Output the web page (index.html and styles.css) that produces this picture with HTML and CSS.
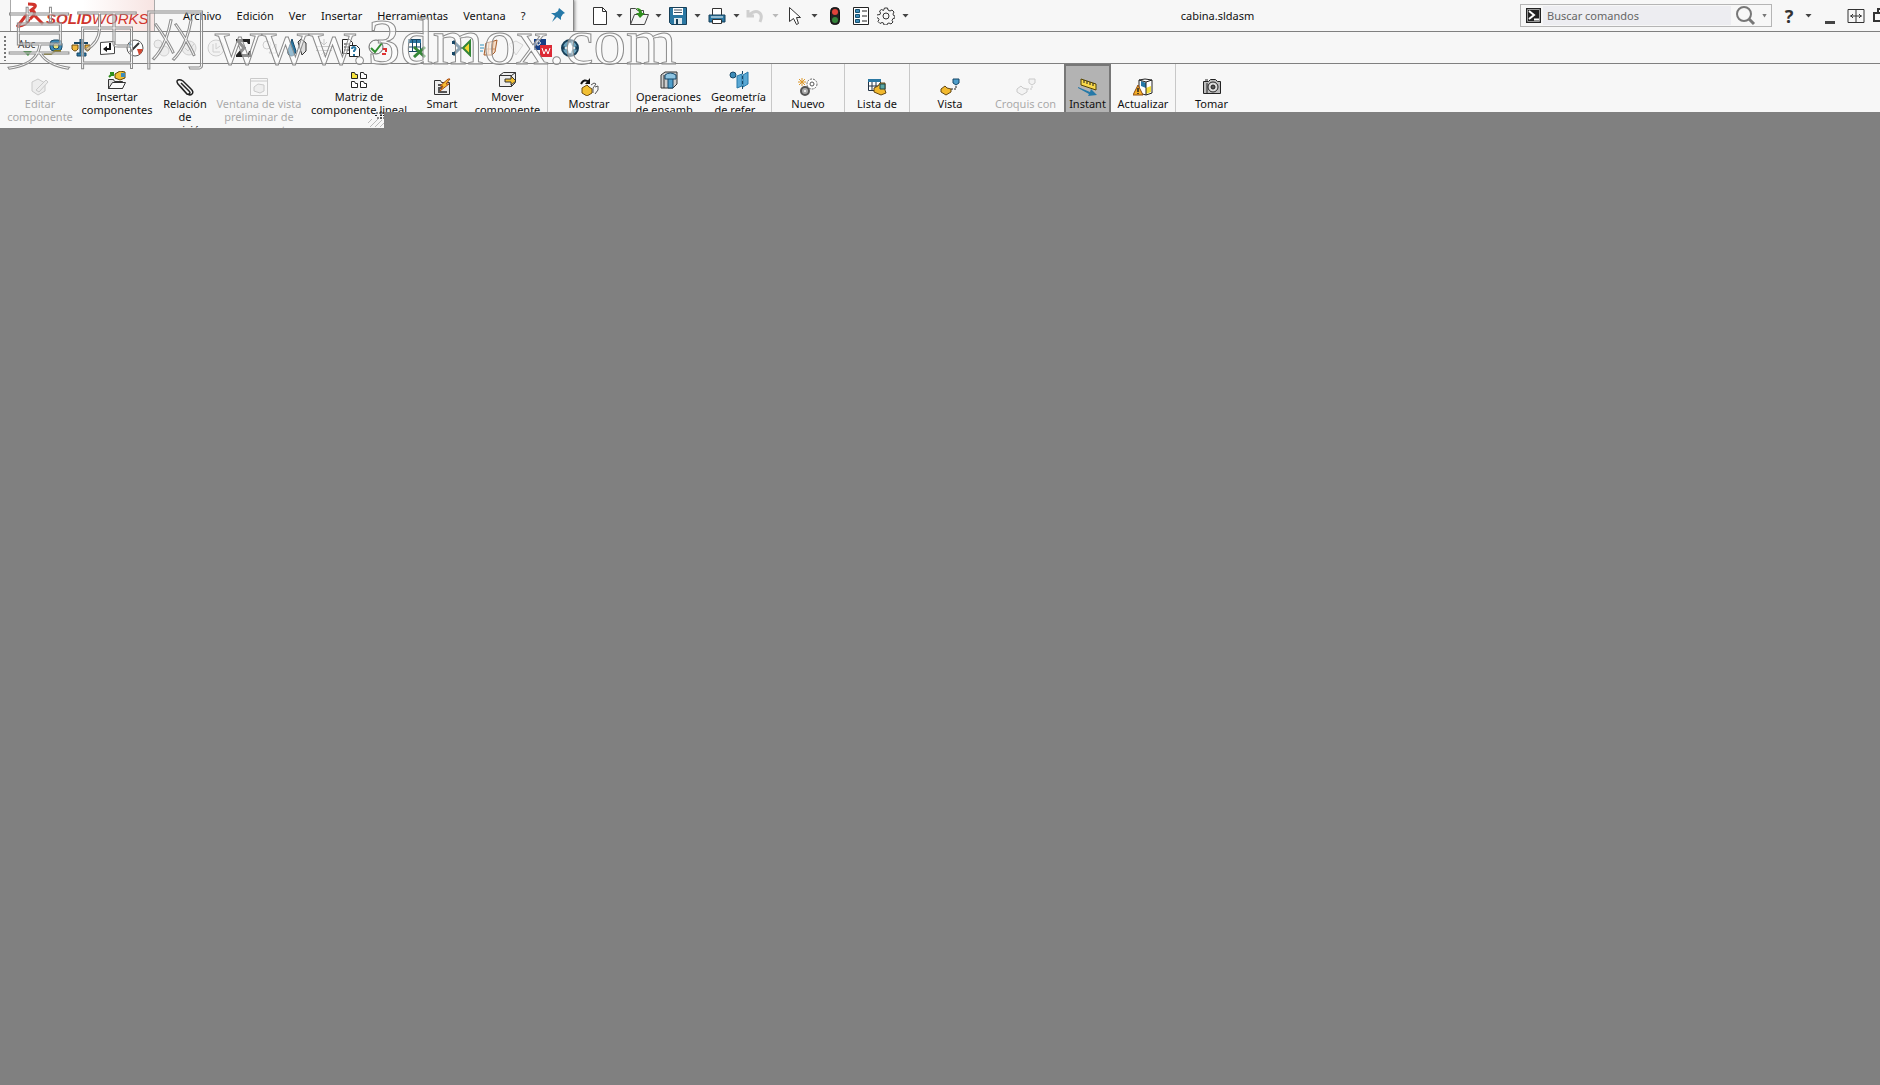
FILE: index.html
```html
<!DOCTYPE html>
<html lang="es">
<head>
    <meta charset="UTF-8">
    <meta name="viewport" content="width=device-width, initial-scale=1.0">
    <title>cabina.sldasm</title>
    <link rel="stylesheet" href="styles.css">
</head>
<body>
    <header class="topbar">
        <div class="menu-panel">
            <div class="logo">
                <svg class="logo-mark" width="28" height="26" viewBox="0 0 28 26" fill="none" stroke="#d0342c" stroke-width="3"><path d="M12 2c7 0 9 1 6 4l-4 3c6-1 6 3 0 8M11 12 1 25M19 14l8 8" /><path d="M2 25c7-1 10-3 12-8" stroke-width="2"/></svg>
                <span class="logo-bold">SOLID</span><span class="logo-thin">WORKS</span>
            </div>
            <nav class="menu">
                <a href="#">Archivo</a>
                <a href="#">Edición</a>
                <a href="#">Ver</a>
                <a href="#">Insertar</a>
                <a href="#">Herramientas</a>
                <a href="#">Ventana</a>
                <a href="#">?</a>
            </nav>
            <button class="pin" aria-label="Fijar menú"><svg width="14" height="14" viewBox="0 0 14 14"><path d="M8 0l6 5-2 1-2 3v3L6 9l-5 5 3-6-4-3h4l3-2z" fill="#2679a8"/></svg></button>
        </div>

        <div class="quick">
            <button class="quick-btn" aria-label="Nuevo"><svg width="18" height="20" viewBox="0 0 18 20"><path d="M2.500 1.500h9l4 4v13h-13z" fill="#fff" stroke="#333"/><path d="M11.500 1.500v4h4" fill="none" stroke="#333"/></svg></button>
            <button class="arrow" aria-label="Más"></button>
            <button class="quick-btn" aria-label="Abrir"><svg width="20" height="20" viewBox="0 0 20 20"><path d="M1.500 18.500v-16h5l2 2h6v4" fill="#eee" stroke="#444"/><path d="M1.500 18.500l4-10h14l-4 10z" fill="#f5f5f5" stroke="#444"/><path d="M7 2q6 0 6 5h3l-5 5-4-5h3q0-3-3-5z" fill="#2f8f1d"/></svg></button>
            <button class="arrow" aria-label="Más"></button>
            <button class="quick-btn" aria-label="Guardar"><svg width="18" height="18" viewBox="0 0 18 18"><path d="M.5.5h17v17h-15l-2-2z" fill="#2b78a3" stroke="#173f58"/><path d="M4 1h10v7H4z" fill="#fff"/><path d="M5 3h8M5 5.500h8" stroke="#456"/><path d="M5 11h8v6H5z" fill="#dce8ee"/><path d="M7 12h2v5H7z" fill="#173f58"/></svg></button>
            <button class="arrow" aria-label="Más"></button>
            <button class="quick-btn" aria-label="Imprimir"><svg width="18" height="18" viewBox="0 0 18 18"><path d="M4.500 8V1.500h9V8" fill="#fff" stroke="#333"/><path d="M1 8h16v7H1z" fill="#2b78a3" stroke="#173f58"/><path d="M4.500 12.500h9v4h-9z" fill="#fff" stroke="#333"/><path d="M3 10h12" stroke="#fff"/></svg></button>
            <button class="arrow" aria-label="Más"></button>
            <button class="quick-btn disabled" aria-label="Deshacer" disabled><svg width="20" height="18" viewBox="0 0 20 18"><path d="M2 3v6h6M3 8c8-7 15-2 11 7" fill="none" stroke="#888" stroke-width="3"/></svg></button>
            <button class="arrow disabled" aria-label="Más" disabled></button>
            <button class="quick-btn" aria-label="Seleccionar"><svg width="18" height="20" viewBox="0 0 18 20"><path d="M3.500 1.500v14l4-3 3 6 2-1-2-6h4z" fill="#fff" stroke="#333"/></svg></button>
            <button class="arrow" aria-label="Más"></button>
            <button class="quick-btn quick-light" aria-label="Reconstruir"><svg width="10" height="18" viewBox="0 0 10 18"><rect x=".5" y=".5" width="9" height="17" rx="4" fill="#222" stroke="#111"/><circle cx="5" cy="5" r="3" fill="#e0433a"/><circle cx="5" cy="13" r="3" fill="#34853a"/></svg></button>
            <button class="quick-btn quick-list" aria-label="Propiedades"><svg width="16" height="18" viewBox="0 0 16 18"><path d="M.5.5h15v17H.5z" fill="#fff" stroke="#222"/><path d="M2.500 2.500h4v3h-4zM2.500 7.500h4v3h-4zM2.500 12.500h4v3h-4z" fill="#3d8cb9" stroke="#17506f"/><path d="M9 4h5M9 9h5M9 14h5" stroke="#222"/></svg></button>
            <button class="quick-btn" aria-label="Opciones"><svg width="18" height="18" viewBox="0 0 18 18" fill="none" stroke="#333"><path d="M7.500 1h3l.5 2 2 1 2-1 2 2-1 2 .5 1.500 1.500.5v2l-2 .5-1 2 1 1.500-2 2-2-1-1.500.5-.5 1.500h-3l-.5-2-1.500-.5-2 1-2-2 1-2-1-1.500-1.500-.5V8L3 7.500l.5-1.500-1-2 2-1.500 2 1z"/><circle cx="9" cy="9" r="3"/></svg></button>
            <button class="arrow" aria-label="Más"></button>
        </div>

        <h1 class="doc-title">cabina.sldasm</h1>

        <div class="search">
            <svg width="15" height="15" viewBox="0 0 15 15"><path d="M0 0h15v15H0z" fill="#222"/><path d="M1.500 1.500h12v12h-12z" fill="none" stroke="#999"/><path d="M3 3l5 4-5 4M8 11.500h5" fill="none" stroke="#fff" stroke-width="2"/></svg>
            <input type="text" placeholder="Buscar comandos" aria-label="Buscar comandos">
            <button class="search-btn" aria-label="Buscar"><svg width="20" height="20" viewBox="0 0 20 20" fill="none" stroke="#777"><circle cx="8" cy="8" r="7" stroke-width="2"/><path d="M13 13l5 5" stroke-width="3"/></svg></button>
            <button class="arrow" aria-label="Más"></button>
        </div>

        <div class="window-tools">
            <button class="help" aria-label="Ayuda">?</button>
            <button class="arrow" aria-label="Más"></button>
            <button aria-label="Minimizar"><svg width="18" height="18" viewBox="0 0 18 18"><path d="M4 14h10v3H4z" fill="#444"/></svg></button>
            <button aria-label="Expandir"><svg width="18" height="18" viewBox="0 0 18 18" fill="none" stroke="#333"><path d="M1 2.500h16v13H1zM9 2v14"/><path d="M3 9h12M6 7L4 9l2 2M12 7l2 2-2 2"/></svg></button>
            <button class="restore" aria-label="Restaurar"><svg width="18" height="18" viewBox="0 0 18 18"><path d="M1 6h11v8H1zM5 6V2h11v8h-4" fill="none" stroke="#333" stroke-width="2"/></svg></button>
        </div>
    </header>

    <div class="toolbar">
        <span class="grip"></span>
        <button aria-label="Ortografía"><svg width="20" height="20" viewBox="0 0 20 20"><text x="1" y="10" class="abc">Abc</text><path d="M6 13h9l-4 5z" fill="#2f8f2f"/></svg></button>
        <button aria-label="Medir"><svg width="20" height="18" viewBox="0 0 20 18"><rect x="6" y="1" width="12" height="11" rx="4" fill="#3d8cb9" stroke="#1d4a66"/><circle cx="12" cy="7" r="3" fill="#e8e27a" stroke="#1d4a66"/><path d="M0 15h7l4-3h6" fill="none" stroke="#8a7a1c" stroke-width="2"/></svg></button>
        <button aria-label="Propiedades físicas"><svg width="20" height="18" viewBox="0 0 20 18"><path d="M9 0h3v14h3v3H6v-3h3z" fill="#2b78a3" stroke="#174766"/><path d="M3 4h14" stroke="#174766" stroke-width="2"/><path d="M1 6h6v4q-3 4-6 0zM14 6h5v4q-3 4-5 0z" fill="#f0b93e" stroke="#6b4a10"/></svg></button>
        <button aria-label="Propiedades de sección"><svg width="18" height="18" viewBox="0 0 18 18"><path d="M1.500 3.500l14-1v12l-14 1z" fill="#fff" stroke="#444"/><path d="M11 4v6H8" fill="none" stroke="#111" stroke-width="2"/><path d="M8 7v6l-4-3z" fill="#111"/></svg></button>
        <button aria-label="Sensor"><svg width="18" height="18" viewBox="0 0 18 18"><circle cx="9" cy="9" r="8" fill="#fff" stroke="#555"/><path d="M4 13L13 4" stroke="#333" stroke-width="2"/><path d="M11 10h6q-1 4-4 6z" fill="#d34832"/><path d="M3 4l4 1-4 4z" fill="#7ab3d0"/></svg></button>
        <button class="disabled" aria-label="Estadísticas" disabled><svg width="18" height="18" viewBox="0 0 18 18" fill="#ddd" stroke="#888"><circle cx="5" cy="5" r="4"/><circle cx="11" cy="12" r="5"/></svg></button>
        <button class="disabled" aria-label="Comprobar" disabled><svg width="18" height="18" viewBox="0 0 18 18" fill="#ddd" stroke="#888"><circle cx="9" cy="9" r="7"/><path d="M5 9l3 3 6-7"/></svg></button>
        <button class="disabled" aria-label="Analizar" disabled><svg width="18" height="18" viewBox="0 0 18 18" fill="#eee" stroke="#888"><circle cx="9" cy="9" r="8"/><path d="M6 5v8h7M9 4v6l4-3"/></svg></button>
        <button aria-label="Ecuaciones"><svg width="18" height="20" viewBox="0 0 18 20"><path d="M2 1h14v5h-2l-1-2H7l5 6-5 6h7l1-3h2v6H2v-2l6-7-6-7z" fill="#222"/></svg></button>
        <button class="disabled" aria-label="Desviación" disabled><svg width="18" height="18" viewBox="0 0 18 18" fill="none" stroke="#888"><circle cx="6" cy="6" r="4"/><path d="M8 14l7-9v9z"/></svg></button>
        <button aria-label="Ángulo de salida"><svg width="20" height="20" viewBox="0 0 20 20"><path d="M5 1l4 12q-1 5-5 5-4-1-3-6z" fill="#2b78a3" stroke="#174766"/><path d="M11 4l3-3 5 4v8l-4 4z" fill="#ddd" stroke="#333"/></svg></button>
        <button class="disabled" aria-label="Espesor" disabled><svg width="18" height="18" viewBox="0 0 18 18" fill="none" stroke="#777"><path d="M1 7.500h16M1 11.500h16M9 0v6M9 13v5M6 3l3 3 3-3M6 16l3-3 3 3"/></svg></button>
        <button aria-label="Comparar documentos"><svg width="20" height="20" viewBox="0 0 20 20"><path d="M1.500 1.500h7l3 3v11h-10z" fill="#fff" stroke="#222"/><path d="M3 6h6M3 9h5M3 12h5" stroke="#222"/><path d="M8.500 7.500h7l3 3v8h-10z" fill="#fff" stroke="#222"/><path d="M11 11q0-2 2-2 3 1 0 4v1M13 16v2" fill="none" stroke="#2b78a3" stroke-width="2"/></svg></button>
        <button aria-label="Verificar"><svg width="20" height="18" viewBox="0 0 20 18" fill="none"><circle cx="8" cy="8" r="7" stroke="#666"/><path d="M3 9l4 4 7-9" stroke="#2f8f2f" stroke-width="2"/><path d="M15 10h3v3M14 15h4" stroke="#d33" stroke-width="2"/></svg></button>
        <button class="tool-excel" aria-label="Tabla de diseño"><svg width="20" height="20" viewBox="0 0 20 20"><path d="M1.500 1.500h12v12h-12z" fill="#fff" stroke="#174766"/><path d="M1 2h13v3H1z" fill="#2b78a3"/><path d="M1 9h13M5.500 2v12M9.500 2v12" stroke="#174766"/><path d="M7 9l11 10M18 9L7 19" stroke="#338536" stroke-width="3"/></svg></button>
        <button class="tool-wide" aria-label="Simetría"><svg width="20" height="18" viewBox="0 0 20 18"><path d="M1 2l7 7-7 7M1 2v3M1 13v3" fill="none" stroke="#174766" stroke-width="3"/><path d="M11 9l7-7v14z" fill="#f2d630" stroke="#338536" stroke-width="2"/></svg></button>
        <button aria-label="Flujo"><svg width="18" height="18" viewBox="0 0 18 18"><path d="M6 4l8-2 3-1-2 12-3 3H4z" fill="#f4dcc6" stroke="#a75c29"/><path d="M0 6h4M0 9h4M0 12h3" stroke="#3292bd"/><path d="M9 4L8 15M13 3l-1 12M5 10h11" stroke="#c98a5c"/></svg></button>
        <button class="disabled" aria-label="Moldes" disabled><svg width="18" height="18" viewBox="0 0 18 18" fill="#eee" stroke="#999"><path d="M2 5l7-3 7 4-7 10z"/></svg></button>
        <button aria-label="DriveWorks"><svg width="18" height="18" viewBox="0 0 18 18"><path d="M0 0h12v11H0z" fill="#153e86"/><path d="M6 6h12v12H6z" fill="#dc2935"/><path d="M3 2h2q3 2 0 4H3z" fill="none" stroke="#fff"/><path d="M8 9l2 6 2-5 2 5 2-6" fill="none" stroke="#fff"/></svg></button>
        <button aria-label="Costing"><svg width="18" height="18" viewBox="0 0 18 18"><circle cx="9" cy="9" r="8" fill="#6ba3bd" stroke="#173f58" stroke-width="2"/><path d="M9 1v3M9 14v3M1 9h3M14 9h3" stroke="#173f58" stroke-width="3"/><path d="M9 3l2 4 4 2-4 2-2 4-2-4-4-2 4-2z" fill="#fff"/></svg></button>
    </div>

    <div class="ribbon">
        <button class="item w80 low disabled" disabled>
            <svg width="20" height="18" viewBox="0 0 20 18" fill="#ddd" stroke="#777"><path d="M2 4l6-3 7 4v8l-7 4-6-4z"/><path d="M6 12L16 2l2 2L9 14z"/></svg>
            <span>Editar<br>componente</span>
        </button>
        <button class="item w74">
            <svg width="20" height="18" viewBox="0 0 20 18"><path d="M1.500 17.500v-9h5l1 2h8v7z" fill="#ddd" stroke="#333"/><path d="M1.500 17.500l4-6h13l-3 6z" fill="#fafafa" stroke="#333"/><path d="M8 3l5-3 5 1v6l-5 2-5-2z" fill="#f2c033" stroke="#5e4608"/><path d="M14 2h4v4h-4z" fill="#3d8cb9"/><path d="M2 6l4-4M3 2h3v3" fill="none" stroke="#2f8f1d" stroke-width="2"/></svg>
            <span>Insertar<br>componentes</span>
        </button>
        <button class="item w62 low">
            <svg width="20" height="18" viewBox="0 0 20 18" fill="none" stroke="#222" stroke-width="1.500"><path d="M6 5l8 8q2 2 0 3t-3-1L3 6Q1 3 3 2t5 1l8 8q3 3 1 5t-5 0L5 8"/></svg>
            <span>Relación<br>de<br>posición</span>
        </button>
        <button class="item w86 low disabled" disabled>
            <svg width="18" height="18" viewBox="0 0 18 18" fill="none" stroke="#777"><path d="M.5.5h17v17H.5zM1 3h17"/><path d="M4 9l4-3 6 1v6l-4 2-6-2z" fill="#ddd"/></svg>
            <span>Ventana de vista<br>preliminar de<br>componente</span>
        </button>
        <button class="item w114">
            <svg width="18" height="18" viewBox="0 0 18 18" fill="#fff" stroke="#222"><path d="M1.500 1.500h3l1 2h2v4h-6z" fill="#f5e23d"/><path d="M10.500 1.500h3l1 2h2v4h-6zM1.500 10.500h3l1 2h2v4h-6zM10.500 10.500h3l1 2h2v4h-6z"/></svg>
            <span>Matriz de<br>componente lineal</span>
        </button>
        <button class="item w52 low">
            <svg width="18" height="18" viewBox="0 0 18 18"><path d="M1.500 2.500h6l1 2h8v12h-15z" fill="#eee" stroke="#333"/><path d="M5 7h4v3H6v4h8" fill="none" stroke="#555" stroke-width="2"/><path d="M15 1L7 8h3l-3 5 9-7h-3l4-5z" fill="#f6bd32" stroke="#a74a13"/></svg>
            <span>Smart</span>
        </button>
        <button class="item w79">
            <svg width="20" height="18" viewBox="0 0 20 18"><path d="M1.500 4.500l4-3h12v10l-4 4h-12z" fill="#eee" stroke="#333"/><path d="M1.500 4.500h12v11M13.500 4.500l4-3" fill="none" stroke="#333"/><path d="M7 8h6V5l5 5-5 4v-3H7z" fill="#f2c033" stroke="#333"/></svg>
            <span>Mover<br>componente</span>
        </button>
        <button class="item w83 low sep">
            <svg width="20" height="18" viewBox="0 0 20 18"><path d="M3 10l5-3 2 2 3 2v4l-5 3-5-3z" fill="#f2c033" stroke="#6b4a10"/><path d="M12 7l3-2 2 1-3 4v5M16 9l3-1v4l-3 4" fill="none" stroke="#555"/><path d="M2 6q3-6 8-2" fill="none" stroke="#111" stroke-width="2"/><path d="M11 0v6H6z" fill="#111"/></svg>
            <span>Mostrar</span>
        </button>
        <button class="item w76 sep">
            <svg width="18" height="18" viewBox="0 0 18 18"><path d="M1 4l4-3h12v12l-4 4H1z" fill="#ccc" stroke="#333"/><path d="M4 4v13" stroke="#333"/><path d="M8 7h5v10H8z" fill="#4f9ecb" stroke="#174766"/><path d="M5 4q5-4 11 0v4H5z" fill="#8dc4e2" stroke="#174766"/></svg>
            <span>Operaciones<br>de ensamb...</span>
        </button>
        <button class="item w65">
            <svg width="20" height="18" viewBox="0 0 20 18"><circle cx="4" cy="4" r="3" fill="#3d8cb9" stroke="#174766"/><path d="M8 5l5-2v12l-5 2zM14 4l5-3v12l-5 3z" fill="#5aa8d4" stroke="#2679a8"/><path d="M13.500 0v18" stroke="#174766" stroke-dasharray="3 2"/></svg>
            <span>Geometría<br>de refer...</span>
        </button>
        <button class="item w73 low sep">
            <svg width="20" height="18" viewBox="0 0 20 18"><circle cx="14" cy="6" r="5" fill="#fff" stroke="#666" stroke-dasharray="2 1"/><circle cx="14" cy="6" r="2" fill="#fff" stroke="#555"/><circle cx="7" cy="13" r="4" fill="#aaa" stroke="#555" stroke-width="2"/><circle cx="7" cy="13" r="1" fill="#fff"/><path d="M4 0v8M0 4h8M1 1l6 6M7 1L1 7" stroke="#dd982a"/></svg>
            <span>Nuevo</span>
        </button>
        <button class="item w65 low sep">
            <svg width="20" height="18" viewBox="0 0 20 18"><path d="M1.500 1.500h12v11h-12z" fill="#fff" stroke="#234"/><path d="M1 1h13v3H1z" fill="#2b78a3"/><path d="M1 8h12M5 4v8M9 4v8" stroke="#234"/><path d="M7 10l4-2 2-3h5v7l1 3-5 2-7-3z" fill="#f2b92e" stroke="#634713"/><path d="M13 6h5v5h-5z" fill="#5aa8a4" stroke="#244"/></svg>
            <span>Lista de</span>
        </button>
        <button class="item w81 low sep">
            <svg width="20" height="18" viewBox="0 0 20 18"><path d="M1 11l4-3 2 2 4 1v3l-5 3-5-3z" fill="#f2b92e" stroke="#634713"/><path d="M13 1h6v4l-3 2-3-2z" fill="#4f9ecb" stroke="#174766"/><path d="M11 11h5V7" fill="none" stroke="#222" stroke-dasharray="2 1"/></svg>
            <span>Vista</span>
        </button>
        <button class="item w71 low disabled" disabled>
            <svg width="20" height="18" viewBox="0 0 20 18" fill="#eee" stroke="#777"><path d="M1 11l4-3 2 2 4 1v3l-5 3-5-3z"/><path d="M13 1h6v4l-3 2-3-2z"/><path d="M11 11h5V7" fill="none" stroke-dasharray="2 1"/></svg>
            <span>Croquis con</span>
        </button>
        <button class="item w47 low pressed" aria-pressed="true">
            <svg width="20" height="18" viewBox="0 0 20 18"><path d="M3 1l15 5v6L3 7z" fill="#f8d84a" stroke="#554400"/><path d="M6 2v3M9 3v3M12 4v3M15 5v3" stroke="#222"/><path d="M0 9l12 5 1-3 6 6-9 1 1-2L0 10z" fill="#2679a8"/></svg>
            <span>Instant</span>
        </button>
        <button class="item w64 low">
            <svg width="20" height="18" viewBox="0 0 20 18"><path d="M6 2l6-1 7 1v13l-6 2-7-2z" fill="#fff" stroke="#222"/><path d="M8 3l5 2v5L8 8z" fill="#2679a8"/><path d="M13 10l5-2v6l-5 2z" fill="#f2dc3c"/><path d="M6 2l7 2 6-2M13 4v13" fill="none" stroke="#222"/><path d="M5 7l5 10H0z" fill="#f5ad26" stroke="#8d4d12"/><path d="M5 10v4M5 15v1" stroke="#222" stroke-width="1.500"/></svg>
            <span>Actualizar</span>
        </button>
        <button class="item w72 low sep">
            <svg width="20" height="18" viewBox="0 0 20 18"><path d="M1.500 3.500h5l2-2h5l2 2h3v12h-17z" fill="#bbb" stroke="#222"/><path d="M3 2h3M5 5v10" stroke="#222"/><circle cx="11" cy="9" r="5" fill="#ddd" stroke="#222"/><circle cx="11" cy="9" r="2" fill="#555" stroke="#222"/></svg>
            <span>Tomar</span>
        </button>
        <svg class="drag-mark" width="22" height="17" viewBox="0 0 22 17"><path d="M2 12l4-4M4 16l8-8M9 16l7-7M14 16l4-4" stroke="#bbb"/><path d="M10 2h8M9 4.500h3M14 4.500h4M11 7h7M15 0v9" stroke="#222" stroke-dasharray="2 1"/></svg>
    </div>

    <main class="viewport"></main>

    <div class="watermark"><span class="watermark-cjk">莫西网</span><span>www.3dmox.com</span></div>
</body>
</html>
```
FILE: styles.css
```css
* {
    box-sizing: border-box;
}
body {
    margin: 0;
    min-height: 100vh;
    display: flex;
    flex-direction: column;
    background-color: #808080;
    color: #111;
    font-family: "Noto Sans", "Open Sans", sans-serif;
    font-size: 11px;
    overflow-x: hidden;
}
button {
    padding: 0;
    border: 0;
    background: none;
    color: inherit;
    font: inherit;
}
svg {
    display: block;
    flex-shrink: 0;
}
.disabled {
    opacity: 0.35;
}

/* Title bar */
.topbar {
    display: flex;
    align-items: center;
    height: 32px;
    background-color: #f7f7f7;
    border-bottom: 1px solid #808080;
    overflow: hidden;
}
.menu-panel {
    display: flex;
    align-items: center;
    flex-shrink: 0;
    width: 574px;
    height: 32px;
    border-right: 1px solid #888;
    border-bottom: 1px solid #111;
    box-shadow: 1px 0 3px #888;
}
.logo {
    display: flex;
    align-items: center;
    width: 145px;
    height: 31px;
    margin-left: 10px;
    padding: 6px 0 0 5px;
    border-left: 1px solid #aaa;
    border-right: 1px solid #aaa;
    background: linear-gradient(to right, #fff, #fff 50%, #f7e4e2);
    color: #d0342c;
    font-family: "Liberation Sans", Arial, sans-serif;
    font-size: 15px;
    font-style: italic;
}
.logo-mark {
    margin-right: 2px;
    margin-top: -6px;
}
.logo-bold {
    font-weight: bold;
}
.menu {
    display: flex;
    gap: 15px;
    margin-left: 28px;
}
.menu a {
    color: #111;
    text-decoration: none;
}
.pin {
    margin-left: auto;
    margin-right: 8px;
}
.quick {
    display: flex;
    align-items: center;
    flex-shrink: 0;
    padding-left: 16px;
}
.quick-btn {
    display: flex;
    justify-content: center;
    width: 20px;
}
.quick-light {
    width: 22px;
}
.quick-list {
    width: 30px;
}
.arrow {
    width: 7px;
    height: 4px;
    margin: 0 6px;
    background-color: #444;
    clip-path: polygon(0 0, 100% 0, 50% 100%);
}
.doc-title {
    flex: 1;
    margin: 0;
    font-size: 11px;
    font-weight: normal;
    text-align: center;
}
.search {
    display: flex;
    align-items: center;
    flex-shrink: 0;
    width: 252px;
    height: 23px;
    padding-left: 5px;
    border: 1px solid #b5b5b5;
}
.search input {
    flex: 1;
    min-width: 0;
    height: 19px;
    margin-left: 2px;
    padding: 0 4px;
    border: 0;
    background-color: #ededf1;
    font: inherit;
}
.search input::placeholder {
    color: #666;
}
.search-btn {
    margin-left: 5px;
}
.search .arrow {
    width: 5px;
    margin: 0 4px 0 6px;
    background-color: #777;
}
.window-tools {
    display: flex;
    align-items: center;
    flex-shrink: 0;
    gap: 8px;
    padding-left: 8px;
    overflow: hidden;
}
.window-tools .arrow {
    margin: 0 1px 0 -1px;
}
.help {
    width: 18px;
    color: #333;
    font-size: 18px;
    font-weight: bold;
    line-height: 24px;
}
.restore {
    width: 7px;
    overflow: hidden;
}

/* Icon toolbar */
.toolbar {
    display: flex;
    align-items: center;
    height: 32px;
    background-color: #f7f7f7;
    border-bottom: 1px solid #808080;
}
.toolbar button {
    display: flex;
    justify-content: center;
    width: 27px;
}
.toolbar .tool-excel {
    margin-left: 12px;
}
.toolbar .tool-wide {
    margin-left: 18px;
}
.grip {
    width: 9px;
    height: 26px;
    margin-right: 4px;
    background: radial-gradient(circle at 5px 2px, #777 1px, transparent 1px) 0 0 / 9px 4px;
}
.abc {
    font-size: 10px;
    fill: #333;
}

/* Command ribbon, its left end is taller than the rest */
.ribbon {
    display: flex;
    position: relative;
    height: 64px;
    background-color: #f7f7f7;
    clip-path: polygon(0 0, 100% 0, 100% 48px, 384px 48px, 384px 100%, 0 100%);
}
.item {
    display: flex;
    flex-direction: column;
    align-items: center;
    flex-shrink: 0;
    padding-top: 7px;
    line-height: 13px;
    white-space: nowrap;
}
.item span {
    margin-top: 1px;
}
.low {
    padding-top: 14px;
}
.sep {
    border-left: 1px solid #c8c8c8;
}
.pressed {
    margin-left: 3px;
    padding-top: 12px;
    border: 2px solid #777;
    background-color: #b3b3b3;
}
.w47 { width: 47px; }
.w52 { width: 52px; }
.w62 { width: 62px; }
.w64 { width: 64px; }
.w65 { width: 65px; }
.w71 { width: 71px; }
.w72 { width: 72px; }
.w73 { width: 73px; }
.w74 { width: 74px; }
.w76 { width: 76px; }
.w79 { width: 79px; }
.w80 { width: 80px; }
.w81 { width: 81px; }
.w83 { width: 83px; }
.w86 { width: 86px; }
.w114 { width: 114px; }
.drag-mark {
    position: absolute;
    left: 366px;
    top: 47px;
}

.viewport {
    flex: 1;
}

/* Embossed site name over the bars */
.watermark {
    position: absolute;
    left: 5px;
    top: 0;
    display: flex;
    align-items: baseline;
    color: rgba(255, 255, 255, 0.5);
    font-family: "Liberation Serif", "Times New Roman", serif;
    font-size: 65px;
    line-height: 70px;
    white-space: nowrap;
    -webkit-text-stroke: 1px #8c8c8c;
    pointer-events: none;
}
.watermark-cjk {
    margin-right: 6px;
    font-family: "Noto Sans CJK SC", sans-serif;
    font-size: 68px;
    font-weight: 100;
}
```
